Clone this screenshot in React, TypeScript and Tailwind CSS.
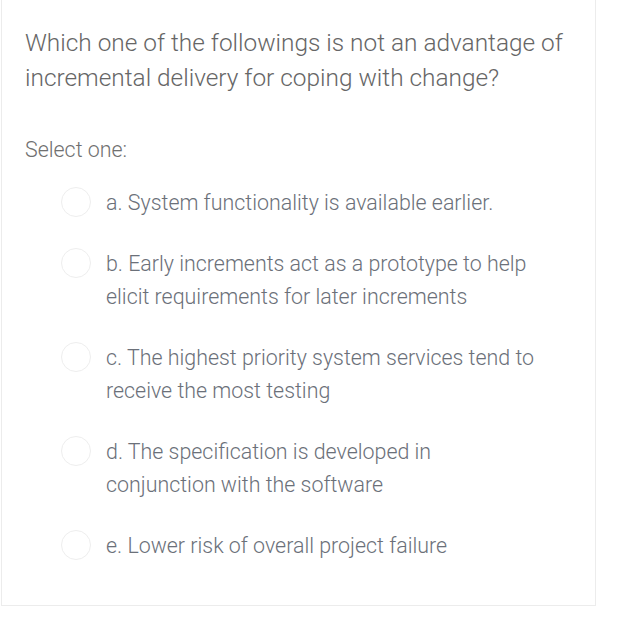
const options: { letter: string; lines: string[] }[] = [
  { letter: "a", lines: ["System functionality is available earlier."] },
  {
    letter: "b",
    lines: ["Early increments act as a prototype to help", "elicit requirements for later increments"],
  },
  {
    letter: "c",
    lines: ["The highest priority system services tend to", "receive the most testing"],
  },
  {
    letter: "d",
    lines: ["The specification is developed in", "conjunction with the software"],
  },
  { letter: "e", lines: ["Lower risk of overall project failure"] },
];

export default function App() {
  return (
    <div className="min-h-[634px] w-[634px] bg-white font-['Roboto','Liberation_Sans',sans-serif] font-light">
      <div className="ml-px w-[595px] border border-t-0 border-[#ececec] px-[23px] pb-[43px] pt-[25px]">
        <p className="text-[24.4px] leading-[35px] text-[#666666]">
          Which one of the followings is not an advantage of
          <br />
          incremental delivery for coping with change?
        </p>
        <p className="mt-[42px] text-[21.4px] leading-[26px] text-[#707070]">Select one:</p>
        <div className="mt-[23px] flex flex-col gap-[28px] pl-[36px]">
          {options.map((o) => (
            <label key={o.letter} className="flex items-start gap-[15px]">
              <span className="mt-[1px] h-[30px] w-[30px] shrink-0 rounded-full border border-[#eeeeee] bg-white" />
              <span className="text-[21.4px] leading-[33px] text-[#6b7079]">
                {o.lines.map((l, i) => (
                  <span key={i} className="block">
                    {i === 0 ? `${o.letter}. ${l}` : l}
                  </span>
                ))}
              </span>
            </label>
          ))}
        </div>
      </div>
    </div>
  );
}
